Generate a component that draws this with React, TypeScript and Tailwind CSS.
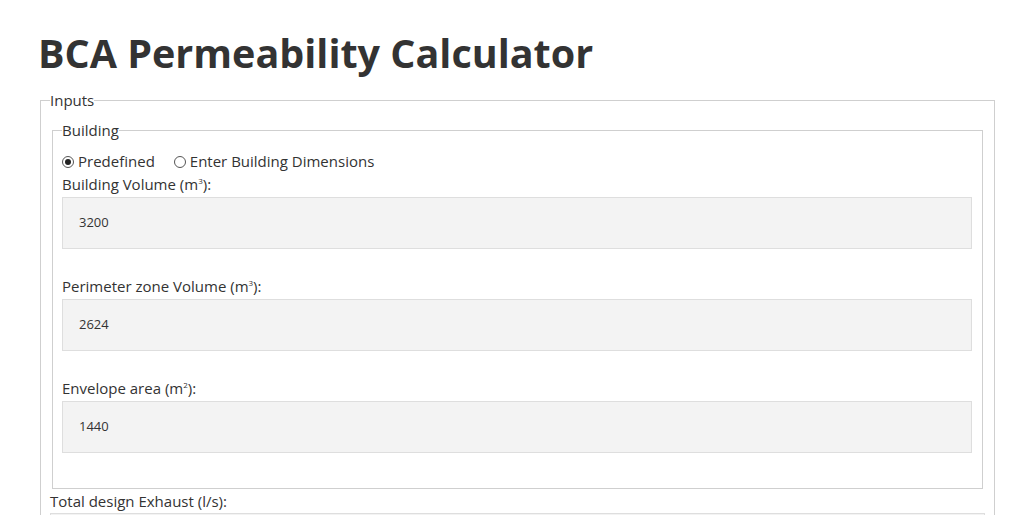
import React from 'react'

const font = { fontFamily: '"Open Sans", "Noto Sans", sans-serif' }

function Radio({ checked, label }: { checked?: boolean; label: string }) {
  return (
    <label className="flex items-center">
      <span className="w-[12px] h-[12px] rounded-full border border-[#555] bg-white flex items-center justify-center">
        {checked && <span className="w-[6px] h-[6px] rounded-full bg-[#222]" />}
      </span>
      <span className="ml-[4px]">{label}</span>
    </label>
  )
}

function Field({ label, unit, value, first }: { label: string; unit?: string; value: string; first?: boolean }) {
  return (
    <div className={first ? 'mt-[1px] mb-[26px]' : 'mb-[26px]'}>
      <div className="leading-[22px]">
        {label}
        {unit && (
          <>
            {' '}(m<sup className="text-[8px] align-[2px]">{unit}</sup>):
          </>
        )}
      </div>
      <div className="mt-[2px] h-[52px] bg-[#f3f3f3] border border-[#dedede] flex items-center pl-[16px] text-[13px] text-[#333]">
        {value}
      </div>
    </div>
  )
}

export default function App() {
  return (
    <div className="bg-white h-[515px] w-[1024px] overflow-hidden text-[#333] text-[15px]" style={font}>
      <div className="pl-[38px] pr-[29px]">
        <h1 className="pt-[31px] text-[39.5px] leading-[44px] font-bold text-[#333]">BCA Permeability Calculator</h1>

        <fieldset className="mt-[15px] ml-[2px] border border-[#cfcfcf] pl-[9px] pr-[9px] pt-[9px]">
          <legend className="px-0 leading-[21px]">Inputs</legend>

          <fieldset className="mx-[2px] border border-[#cfcfcf] pl-[9px] pr-[10px] pt-[10px] pb-[9px]">
            <legend className="px-0 leading-[21px]">Building</legend>
            <div className="flex gap-[19px] leading-[21px]">
              <Radio checked label="Predefined" />
              <Radio label="Enter Building Dimensions" />
            </div>
            <Field first label="Building Volume" unit="3" value="3200" />
            <Field label="Perimeter zone Volume" unit="3" value="2624" />
            <Field label="Envelope area" unit="2" value="1440" />
          </fieldset>

          <div className="leading-[22px] mt-[1px]">Total design Exhaust (l/s):</div>
          <div className="mt-[1px] h-[52px] bg-[#f3f3f3] border border-[#dedede]" />
        </fieldset>
      </div>
    </div>
  )
}
